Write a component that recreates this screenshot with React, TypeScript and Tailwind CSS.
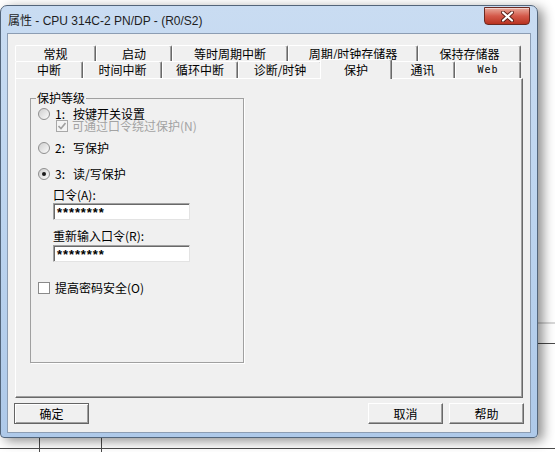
import React from 'react';

const row1 = [
  { label: '常规', w: 'w-[81px]' },
  { label: '启动', w: 'w-[76px]' },
  { label: '等时周期中断', w: 'w-[116px]' },
  { label: '周期/时钟存储器', w: 'w-[130px]' },
  { label: '保持存储器', w: 'w-[103px]' },
];

const row2 = [
  { label: '中断', w: 'w-[68px]' },
  { label: '时间中断', w: 'w-[79px]' },
  { label: '循环中断', w: 'w-[76px]' },
  { label: '诊断/时钟', w: 'w-[84px]' },
  { label: '保护', w: 'w-[72px]', selected: true },
  { label: '通讯', w: 'w-[65px]' },
  { label: 'Web', w: 'w-[66px]', mono: true },
];

function Radio({ checked }: { checked?: boolean }) {
  return (
    <span className="w-[12px] h-[12px] shrink-0 rounded-full border border-[#8f8f8f] bg-gradient-to-br from-[#cfcfcf] to-[#fbfbfb] flex items-center justify-center">
      {checked && <span className="w-[4px] h-[4px] rounded-full bg-[#1c1c1c]" />}
    </span>
  );
}

function Check({ checked, disabled }: { checked?: boolean; disabled?: boolean }) {
  return (
    <span
      className={
        disabled
          ? 'w-[12px] h-[12px] shrink-0 border border-[#a8a8a8] bg-[#f4f4f4] flex items-center justify-center'
          : 'w-[12px] h-[12px] shrink-0 border border-[#8a8a8a] bg-white flex items-center justify-center'
      }
    >
      {checked && (
        <svg width="8" height="8" viewBox="0 0 8 8">
          <path d="M0.5 4 L3 6.5 L7.5 1" fill="none" stroke={disabled ? '#a0a0a0' : '#222'} strokeWidth="1.6" />
        </svg>
      )}
    </span>
  );
}

function Field() {
  return (
    <div className="w-[137px] h-[17px] bg-white border border-t-[#a0a0a0] border-l-[#a0a0a0] border-r-[#e3e3e3] border-b-[#e3e3e3] shadow-[inset_1px_1px_0_#696969] pl-[3px] flex items-center">
      <span className="font-['Liberation_Sans',sans-serif] font-bold text-[13px] tracking-[0.9px] leading-none mt-[2px]">********</span>
    </div>
  );
}

function Btn({ label, primary }: { label: string; primary?: boolean }) {
  return (
    <div
      className={
        primary
          ? 'w-[75px] h-[21px] flex items-center justify-center border border-[#646464] shadow-[inset_1px_1px_0_#ffffff,inset_-1px_-1px_0_#a0a0a0] bg-[#f0f0f0]'
          : 'w-[75px] h-[21px] flex items-center justify-center border border-t-white border-l-white border-r-[#696969] border-b-[#696969] shadow-[inset_-1px_-1px_0_#a0a0a0] bg-[#f0f0f0]'
      }
    >
      {label}
    </div>
  );
}

function CloseButton() {
  return (
    <div className="w-[46px] h-[18px] rounded-b-[4px] border border-[#6b2a22] bg-gradient-to-b from-[#e7a89c] via-[#d4594a] to-[#b8321f] shadow-[inset_0_1px_0_rgba(255,255,255,0.5)] flex items-center justify-center">
      <svg width="13" height="11" viewBox="0 0 13 11">
        <path d="M2 1.5 L11 9.5 M11 1.5 L2 9.5" stroke="#5a1e16" strokeWidth="4" strokeLinecap="round" />
        <path d="M2 1.5 L11 9.5 M11 1.5 L2 9.5" stroke="#ffffff" strokeWidth="2.2" strokeLinecap="round" />
      </svg>
    </div>
  );
}

function Option({ num, label, checked, className }: { num: string; label: string; checked?: boolean; className?: string }) {
  return (
    <div className={`h-[12px] flex items-center gap-[5px] leading-[12px] ${className ?? ''}`}>
      <Radio checked={checked} />
      <span className="w-[13px] shrink-0">{num}:</span>
      <span>{label}</span>
    </div>
  );
}

export default function App() {
  return (
    <div className="relative w-[555px] h-[452px] overflow-hidden bg-white text-[12px] text-black font-['Noto_Sans_CJK_SC',sans-serif]">
      {/* desktop behind the dialog */}
      <div className="absolute left-0 right-0 top-[448px] h-px bg-[#4a4a4a]" />
      <div className="absolute left-[39px] top-[437px] bottom-0 w-px bg-[#4a4a4a]" />
      <div className="absolute left-[101px] top-[437px] bottom-0 w-px bg-[#4a4a4a]" />
      <div className="absolute left-[537px] right-0 top-[322px] h-[2px] bg-[#d8d8d8]" />
      <div className="absolute left-[537px] right-0 top-[343px] h-px bg-[#4a4a4a]" />

      <div className="pt-[5px]">
        <div className="relative w-[538px] h-[433px] rounded-t-[7px] rounded-b-[4px] border border-[#53657a] bg-gradient-to-b from-[#c9dcf2] via-[#bcd4ef] to-[#aec9e9] shadow-[5px_3px_12px_rgba(0,0,0,0.45)] flex flex-col">
          {/* title bar */}
          <div className="h-[27px] flex items-start">
            <span className="mt-[7px] ml-[7px] leading-[16px] text-[12px] text-[#1e1e1e] font-['Liberation_Sans','Noto_Sans_CJK_SC',sans-serif]">
              属性 - CPU 314C-2 PN/DP - (R0/S2)
            </span>
            <div className="ml-auto mt-[1px] mr-[7px]">
              <CloseButton />
            </div>
          </div>

          {/* client area */}
          <div className="mx-[6px] mb-[4px] flex-1 border border-[#8c9db3] bg-[#f0f0f0] flex flex-col pl-[7px] pt-[11px]">
            {/* tabs */}
            <div className="flex flex-col">
              <div className="flex h-[16px]">
                {row1.map((t) => (
                  <div
                    key={t.label}
                    className={`${t.w} h-[16px] shrink-0 flex items-center justify-center leading-none border-t border-l border-t-white border-l-white border-r border-r-[#696969] shadow-[inset_-1px_0_0_#a0a0a0] rounded-t-[2px]`}
                  >
                    {t.label}
                  </div>
                ))}
              </div>
              <div className="flex h-[17px] items-start">
                {row2.map((t) =>
                  t.selected ? (
                    <div
                      key={t.label}
                      className={`${t.w} relative z-10 -mx-[2px] -mt-[2px] -mb-[1px] h-[20px] shrink-0 flex items-center justify-center leading-none bg-[#f0f0f0] border-t border-l border-t-white border-l-white border-r border-r-[#696969] shadow-[inset_-1px_0_0_#a0a0a0] rounded-t-[2px]`}
                    >
                      <span className="leading-[12px]">{t.label}</span>
                    </div>
                  ) : (
                    <div
                      key={t.label}
                      className={`${t.w} h-[17px] shrink-0 flex items-center justify-center leading-none bg-[#f0f0f0] border-t border-l border-t-white border-l-white border-r border-r-[#696969] shadow-[inset_-1px_0_0_#a0a0a0] rounded-t-[2px] ${t.mono ? "font-['DejaVu_Sans_Mono',monospace] text-[10px] tracking-[1px]" : ''}`}
                    >
                      {t.label}
                    </div>
                  )
                )}
              </div>
            </div>

            {/* tab page */}
            <div className="w-[508px] h-[320px] border border-t-white border-l-white border-r-[#696969] border-b-[#696969] shadow-[inset_-1px_-1px_0_#a0a0a0] pl-[14px] pt-[19px]">
              <div className="relative w-[214px] h-[265px] border border-[#a0a0a0] shadow-[1px_1px_0_#ffffff] pl-[7px] pt-[9px] flex flex-col">
                <span className="absolute -top-[8px] left-[5px] bg-[#f0f0f0] px-[1px] leading-[14px]">保护等级</span>

                <Option num="1" label="按键开关设置" />
                <div className="h-[12px] flex items-center gap-[4px] pl-[18px] leading-[12px]">
                  <Check checked disabled />
                  <span className="text-[#a3a3a3]">可通过口令绕过保护(N)</span>
                </div>
                <Option num="2" label="写保护" className="mt-[10px]" />
                <Option num="3" label="读/写保护" checked className="mt-[14px]" />

                <div className="pl-[15px] flex flex-col">
                  <div className="mt-[9px] h-[12px] flex items-center leading-[12px]">口令(A):</div>
                  <div className="mt-[2px]">
                    <Field />
                  </div>
                  <div className="mt-[10px] h-[12px] flex items-center leading-[12px]">重新输入口令(R):</div>
                  <div className="mt-[3px]">
                    <Field />
                  </div>
                </div>

                <div className="mt-[20px] h-[12px] flex items-center gap-[5px] leading-[12px]">
                  <Check />
                  <span>提高密码安全(O)</span>
                </div>
              </div>
            </div>

            {/* buttons */}
            <div className="mt-[5px] flex items-center -ml-[1px] pr-[6px]">
              <Btn label="确定" primary />
              <div className="ml-auto flex gap-[6px]">
                <Btn label="取消" />
                <Btn label="帮助" />
              </div>
            </div>
          </div>
        </div>
      </div>
    </div>
  );
}
